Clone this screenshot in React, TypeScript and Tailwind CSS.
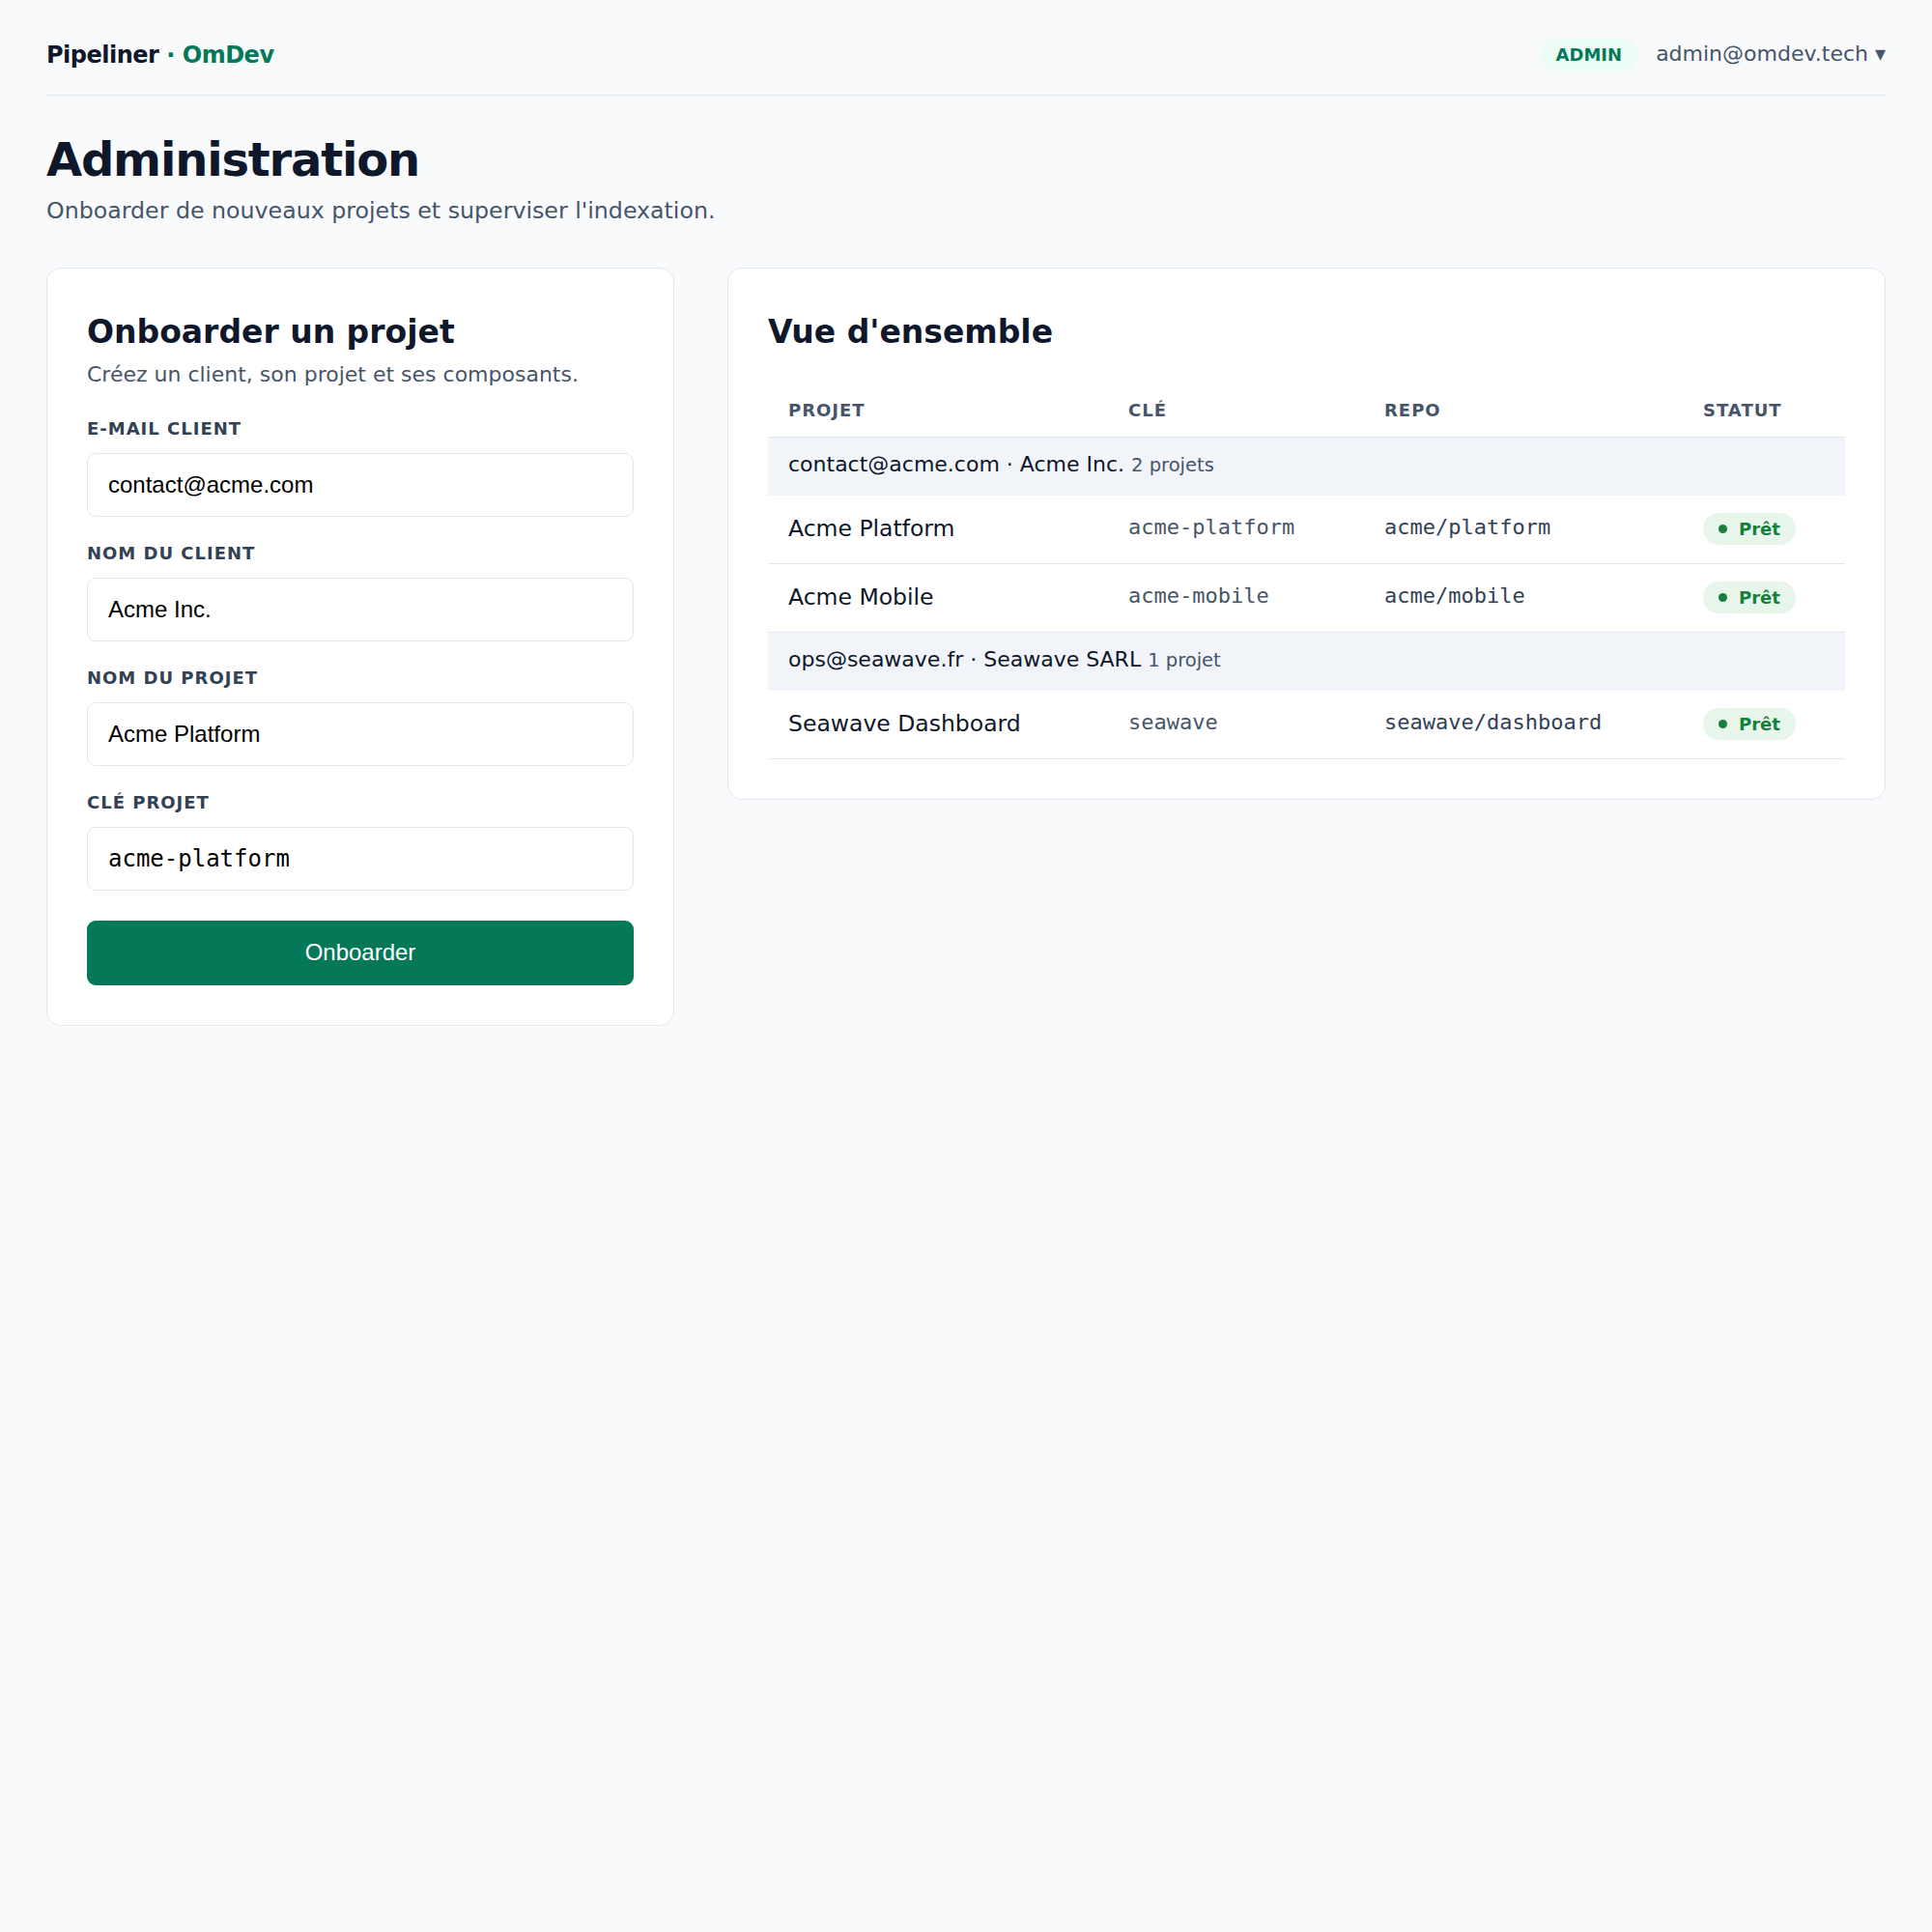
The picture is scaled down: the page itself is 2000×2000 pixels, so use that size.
type Project = { name: string; key: string; repo: string };
type Client = { email: string; company: string; projects: Project[] };

const clients: Client[] = [
  {
    email: "contact@acme.com",
    company: "Acme Inc.",
    projects: [
      { name: "Acme Platform", key: "acme-platform", repo: "acme/platform" },
      { name: "Acme Mobile", key: "acme-mobile", repo: "acme/mobile" },
    ],
  },
  {
    email: "ops@seawave.fr",
    company: "Seawave SARL",
    projects: [{ name: "Seawave Dashboard", key: "seawave", repo: "seawave/dashboard" }],
  },
];

const fields = [
  { label: "E-mail client", value: "contact@acme.com", mono: false },
  { label: "Nom du client", value: "Acme Inc.", mono: false },
  { label: "Nom du projet", value: "Acme Platform", mono: false },
  { label: "Clé projet", value: "acme-platform", mono: true },
];

function StatusBadge() {
  return (
    <span className="inline-flex h-[33px] items-center gap-[12px] rounded-full bg-[#e7f5eb] px-[16px] text-[18px] font-bold leading-[27px] text-[#15803d]">
      <span className="h-[9px] w-[9px] rounded-full bg-[#15803d]" />
      Prêt
    </span>
  );
}

function OnboardCard() {
  return (
    <section className="w-[650px] shrink-0 rounded-[15px] border border-[#e2e8f0] bg-white p-[41px]">
      <h2 className="text-[33px] font-bold leading-[49.5px] text-[#0f172a]">Onboarder un projet</h2>
      <p className="mt-[2px] text-[22px] leading-[33px] text-[#475569]">
        Créez un client, son projet et ses composants.
      </p>
      <form className="mt-[26px]" onSubmit={(e) => e.preventDefault()}>
        {fields.map((f, i) => (
          <div key={f.label} className={i === 0 ? "" : "mt-[24px]"}>
            <label className="block text-[18px] font-bold uppercase leading-[27px] tracking-[1px] text-[#334155]">
              {f.label}
            </label>
            <input
              defaultValue={f.value}
              className={
                f.mono
                  ? "mt-[12px] block h-[66px] w-full rounded-[9px] border border-[#e2e8f0] bg-white px-[21px] font-['DejaVu_Sans_Mono',monospace] text-[24px] text-black outline-none"
                  : "mt-[12px] block h-[66px] w-full rounded-[9px] border border-[#e2e8f0] bg-white px-[21px] font-['Liberation_Sans',Arial,sans-serif] text-[24px] text-black outline-none"
              }
            />
          </div>
        ))}
        <button
          type="submit"
          className="mt-[31px] block h-[67px] w-full rounded-[9px] bg-[#047857] font-['Liberation_Sans',Arial,sans-serif] text-[24px] text-white"
        >
          Onboarder
        </button>
      </form>
    </section>
  );
}

function OverviewCard() {
  return (
    <section className="min-w-0 flex-1 rounded-[15px] border border-[#e2e8f0] bg-white p-[41px]">
      <h2 className="text-[33px] font-bold leading-[49.5px] text-[#0f172a]">Vue d'ensemble</h2>
      <div className="mt-[24px]">
        <div className="grid grid-cols-[352px_265px_330px_1fr] border-b border-[#e2e8f0] pt-[18px] pb-[14px] text-[18px] font-bold uppercase leading-[27px] tracking-[1px] text-[#475569]">
          <div className="pl-[21px]">Projet</div>
          <div className="pl-[21px]">Clé</div>
          <div className="pl-[21px]">Repo</div>
          <div className="pl-[21px]">Statut</div>
        </div>
        {clients.map((c) => (
          <div key={c.email}>
            <div className="flex h-[60px] items-center bg-[#f1f5f9] px-[21px] pb-[4px] text-[22px] leading-[33px] text-[#0f172a]">
              <span>
                {c.email} · {c.company}{" "}
                <span className="text-[19.5px] text-[#475569]">
                  {c.projects.length} {c.projects.length > 1 ? "projets" : "projet"}
                </span>
              </span>
            </div>
            {c.projects.map((p) => (
              <div
                key={p.key}
                className="grid h-[71px] grid-cols-[352px_265px_330px_1fr] items-center border-b border-[#e2e8f0]"
              >
                <div className="pl-[21px] text-[23.5px] text-[#0f172a]">{p.name}</div>
                <div className="pb-[5px] pl-[21px] font-['DejaVu_Sans_Mono',monospace] text-[22px] text-[#475569]">
                  {p.key}
                </div>
                <div className="pb-[5px] pl-[21px] font-['DejaVu_Sans_Mono',monospace] text-[22px] text-[#334155]">
                  {p.repo}
                </div>
                <div className="pl-[21px]">
                  <StatusBadge />
                </div>
              </div>
            ))}
          </div>
        ))}
      </div>
    </section>
  );
}

export default function App() {
  return (
    <div className="min-h-screen bg-[#f8fafc] px-[48px] font-['DejaVu_Sans',sans-serif] text-[#0f172a]">
      <header className="flex h-[99px] items-center justify-between border-b border-[#e2e8f0] pt-[16px]">
        <div className="text-[24px] font-bold leading-[36px] tracking-[-0.5px]">
          <span className="text-[#0f172a]">Pipeliner</span>
          <span className="text-[#047857]"> · OmDev</span>
        </div>
        <div className="mb-[1px] flex items-center gap-[18px]">
          <span className="flex h-[33px] items-center rounded-full bg-[#ecfdf5] px-[17px] text-[18px] font-bold text-[#047857]">
            ADMIN
          </span>
          <span className="mb-[3px] text-[22px] leading-[33px] text-[#475569]">admin@omdev.tech ▾</span>
        </div>
      </header>

      <h1 className="mt-[37px] text-[48px] font-bold leading-[58px] tracking-[-1.2px] text-[#0f172a]">
        Administration
      </h1>
      <p className="mt-[6px] text-[23.7px] leading-[36px] text-[#475569]">
        Onboarder de nouveaux projets et superviser l'indexation.
      </p>

      <div className="mt-[41px] flex items-start gap-[55px]">
        <OnboardCard />
        <OverviewCard />
      </div>
    </div>
  );
}
